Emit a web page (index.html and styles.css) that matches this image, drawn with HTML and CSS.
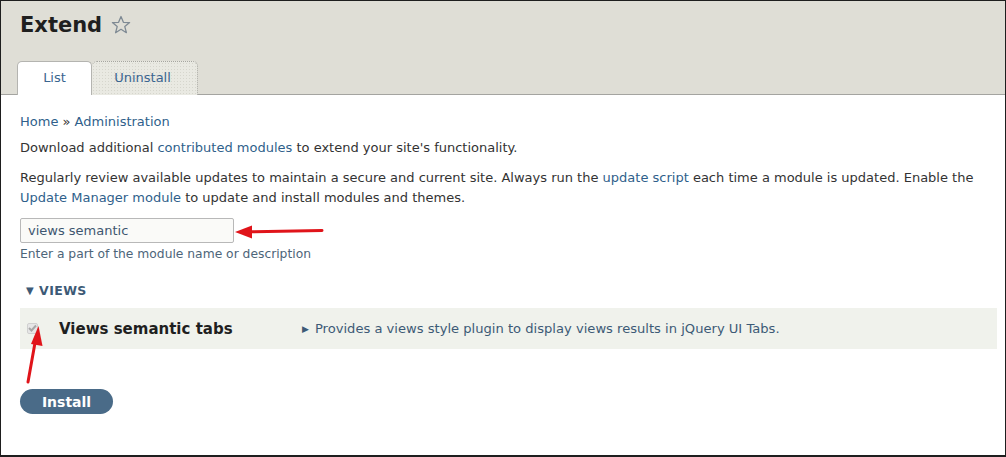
FILE: index.html
```html
<!DOCTYPE html>
<html>
<head>
<meta charset="utf-8">
<link rel="stylesheet" href="styles.css">
</head>
<body>
<div class="frame">
  <header class="header">
    <h1 class="title">Extend <svg class="star" width="20" height="20" viewBox="0 0 20 20"><path d="M10 1.5 L12.4 7.3 L18.6 7.6 L13.8 11.6 L15.4 17.7 L10 14.3 L4.6 17.7 L6.2 11.6 L1.4 7.6 L7.6 7.3 Z" fill="none" stroke="#7f8a94" stroke-width="1.3" stroke-linejoin="round"/></svg></h1>
    <nav class="tabs">
      <a class="tab active">List</a>
      <a class="tab">Uninstall</a>
    </nav>
  </header>
  <main class="content">
    <div class="breadcrumb"><a>Home</a> » <a>Administration</a></div>
    <p class="p1">Download additional <a>contributed modules</a> to extend your site's functionality.</p>
    <p class="p2">Regularly review available updates to maintain a secure and current site. Always run the <a>update script</a> each time a module is updated. Enable the <a>Update Manager module</a> to update and install modules and themes.</p>
    <div class="search">
      <div class="input">views semantic</div>
      <div class="hint">Enter a part of the module name or description</div>
    </div>
    <div class="group"><span class="down">▼</span>VIEWS</div>
    <div class="row">
      <span class="check"><svg width="9" height="8" viewBox="0 0 9 8"><path d="M1 4 L3.5 6.5 L8 1.5" fill="none" stroke="#a7a7a7" stroke-width="2"/></svg></span>
      <span class="name">Views semantic tabs</span>
      <span class="desc"><span class="tri">▶</span>Provides a views style plugin to display views results in jQuery UI Tabs.</span>
    </div>
    <button class="install">Install</button>
  </main>
  <svg class="annot" width="1006" height="457" viewBox="0 0 1006 457">
    <line x1="322" y1="230.5" x2="248" y2="231.8" stroke="#e0141a" stroke-width="3" stroke-linecap="round"/>
    <polygon points="235,232 252,225.5 252,238.5" fill="#e0141a"/>
    <line x1="28" y1="382" x2="35.5" y2="340" stroke="#e0141a" stroke-width="3" stroke-linecap="round"/>
    <polygon points="38.5,326 31,344 42.5,346" fill="#e0141a"/>
  </svg>
</div>
</body>
</html>
```
FILE: styles.css
```css
* { box-sizing: border-box; }
html, body { margin: 0; padding: 0; background: #fff; }
body { font-family: "DejaVu Sans", sans-serif; font-size: 13px; color: #333; }
a { color: #2f5f8b; text-decoration: none; }
.frame {
  position: relative;
  width: 1006px;
  height: 457px;
  border: 1px solid #1e1e1e;
  border-bottom-width: 2px;
  overflow: hidden;
  background: #fff;
}
.header {
  background: #dfded6;
  border-bottom: 1px solid #a4a4a0;
  height: 94px;
  padding: 0 0 0 16px;
  display: flex;
  flex-direction: column;
  justify-content: space-between;
}
.title {
  margin: 10px 0 0 3px;
  font-size: 21px;
  font-weight: bold;
  color: #1f1f1f;
  display: flex;
  align-items: center;
  gap: 9px;
  line-height: 28px;
}
.star { margin-top: -1px; }
.tabs { display: flex; margin-bottom: -1px; }
.tab {
  display: flex;
  align-items: center;
  justify-content: center;
  height: 34px;
  font-size: 13px;
  color: #3b6590;
  border-radius: 5px 5px 0 0;
  padding-bottom: 2px;
}
.tab.active {
  width: 75px;
  background: #fff;
  border: 1px solid #b4b4b0;
  border-bottom: none;
}
.tab:not(.active) {
  width: 106px;
  padding-right: 4px;
  background-color: #e9e9e2;
  background-image: radial-gradient(#d6d6cd 0.6px, transparent 0.8px);
  background-size: 3px 3px;
  border: 1px dotted #a6a6a0;
  border-left: none;
  border-bottom: none;
}
.content { padding: 19px 8px 0 19px; }
.breadcrumb { line-height: 16px; }
.p1 { margin: 8px 0 0; line-height: 20px; }
.p2 { margin: 10px 0 0; line-height: 20px; }
.search { margin-top: 10px; }
.input {
  width: 214px;
  height: 25px;
  border: 1px solid #b8b8b8;
  border-radius: 2px;
  padding: 2px 7px 0;
  line-height: 20px;
  color: #3e5670;
  background-color: #fafaf8;
}
.hint { margin-top: 2px; line-height: 18px; color: #4d6579; font-size: 12.3px; }
.group {
  margin: 20px 0 0 6px;
  font-size: 12.5px;
  font-weight: bold;
  color: #3d5a76;
  letter-spacing: 0.4px;
  line-height: 16px;
}
.down { font-size: 10px; margin-right: 5px; vertical-align: 1px; }
.row {
  margin-top: 9px;
  height: 41px;
  background: #f0f2ec;
  display: flex;
  align-items: center;
}
.check {
  width: 11px;
  height: 11px;
  margin-left: 7px;
  margin-top: -1px;
  border: 1px solid #d0d0d0;
  border-radius: 2px;
  background: #e6e6e6;
  display: flex;
  align-items: center;
  justify-content: center;
}
.name {
  margin-left: 21px;
  width: 243px;
  font-size: 15px;
  font-weight: bold;
  color: #1f1f1f;
}
.desc { color: #3d5a76; font-size: 13.1px; }
.tri { font-size: 9px; margin-right: 6px; vertical-align: 1px; color: #3d5a76; }
.install {
  margin-top: 40px;
  width: 93px;
  height: 25px;
  border: none;
  border-radius: 13px;
  background: #4a6b88;
  color: #fff;
  font-family: "DejaVu Sans", sans-serif;
  font-weight: bold;
  font-size: 14px;
  padding: 0;
  display: block;
}
.annot { position: absolute; left: -1px; top: -1px; pointer-events: none; }
```
